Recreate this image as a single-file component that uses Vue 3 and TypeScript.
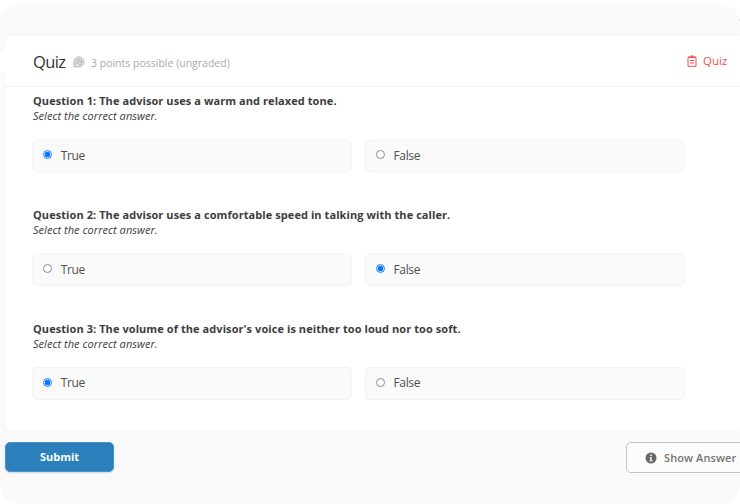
<script setup lang="ts">
import { ref } from 'vue'

interface Question {
  id: number
  text: string
  answer: 'True' | 'False'
}

const choices = ['True', 'False'] as const

const questions = ref<Question[]>([
  { id: 1, text: 'The advisor uses a warm and relaxed tone.', answer: 'True' },
  { id: 2, text: 'The advisor uses a comfortable speed in talking with the caller.', answer: 'False' },
  { id: 3, text: "The volume of the advisor's voice is neither too loud nor too soft.", answer: 'True' },
])
</script>

<template>
  <main class="page">
    <span class="edge-tab"></span>
    <span class="edge-dot"></span>
    <section class="card">
      <header class="card-head">
        <h1 class="title">Quiz</h1>
        <svg class="badge" viewBox="0 0 12 12" fill="none" stroke="#b2b2b2" stroke-width="1">
          <path d="M1 10.8V6A5 4.9 0 1 1 6 10.8Z" fill="#e6e6e6" />
          <path d="M3 9V6a3 2.9 0 1 1 3 3M5 8V6a1.2 1.2 0 1 1 1.4 1.2" />
        </svg>
        <span class="points">3 points possible (ungraded)</span>
        <span class="kind">
          <svg class="kind-icon" viewBox="0 0 10 12" fill="none" stroke="#f0504f" stroke-width="1">
            <path d="M1 2.3h8v9H1z" />
            <path d="M1 2.2h8" stroke-width="1.5" />
            <path d="M3.5 1.2h3M5 0v2M2.8 5.5h4.4M2.8 8h4.4" />
          </svg>
          <span>Quiz</span>
        </span>
      </header>
      <div class="questions">
        <fieldset v-for="q in questions" :key="q.id" class="question">
          <h2 class="prompt">Question {{ q.id }}: {{ q.text }}</h2>
          <p class="hint">Select the correct answer.</p>
          <div class="choices">
            <label v-for="c in choices" :key="c" class="choice">
              <input v-model="q.answer" class="radio" type="radio" :name="`q${q.id}`" :value="c" />
              <span>{{ c }}</span>
            </label>
          </div>
        </fieldset>
      </div>
    </section>
    <footer class="actions">
      <button class="submit" type="button">Submit</button>
      <button class="show" type="button">
        <svg class="info" viewBox="0 0 12 12">
          <circle cx="6" cy="6" r="5.5" fill="#666" />
          <path d="M5 2.5h2v1.4H5zM4.6 5H7v3.2h.7v1.2H4.4V8.2H5V6.1h-.4z" fill="#d8d8d8" />
        </svg>
        <span>Show Answer</span>
      </button>
    </footer>
  </main>
</template>

<style>
body {
  background: #fff;
}
</style>

<style scoped>
.page {
  position: relative;
  box-sizing: border-box;
  width: 740px;
  height: 500px;
  margin-top: 4px;
  padding: 32px 0 0 5px;
  overflow: hidden;
  border-radius: 20px;
  background: #fafafa;
  color: #3c3c3c;
  font-family: 'Open Sans', sans-serif;
}
.edge-tab {
  position: absolute;
  left: 0;
  top: 48px;
  width: 5px;
  height: 20px;
  background: #fff;
}
.edge-dot {
  position: absolute;
  right: -5px;
  top: 12px;
  width: 6px;
  height: 6px;
  border-radius: 50%;
  background: #ccc;
}
.card {
  box-sizing: border-box;
  height: 394px;
  border-radius: 5px 0 0 5px;
  background: #fff;
  box-shadow: 0 0 2px rgba(0, 0, 0, 0.07);
}
.card-head {
  box-sizing: border-box;
  display: flex;
  align-items: center;
  height: 51px;
  padding: 0 13px 0 28px;
  border-bottom: 1px solid #f1f1f1;
}
.title {
  margin: 0;
  padding-top: 1px;
  width: 33px;
  font-size: 16.5px;
  font-weight: 400;
  line-height: 24px;
  letter-spacing: -0.6px;
  color: #333;
}
.badge {
  width: 12px;
  height: 12px;
  margin: 1px 6px 0 7px;
}
.points {
  padding-top: 3px;
  font-size: 10.5px;
  line-height: 16px;
  color: #aaa;
}
.kind {
  display: flex;
  align-items: center;
  gap: 6px;
  margin-left: auto;
  font-size: 11.5px;
  line-height: 16px;
  letter-spacing: -0.1px;
  color: #f0504f;
}
.kind-icon {
  width: 10px;
  height: 12px;
}
.questions {
  display: flex;
  flex-direction: column;
  gap: 33.7px;
  padding: 6.3px 55px 0 28px;
}
.question {
  min-width: 0;
  margin: 0;
  padding: 0;
  border: 0;
  height: 80px;
}
.prompt,
.hint {
  margin: 0;
  line-height: 15px;
  white-space: nowrap;
}
.prompt {
  font-size: 11px;
  font-weight: 700;
  letter-spacing: 0.075px;
}
.hint {
  font-size: 11px;
  letter-spacing: 0.04px;
  font-style: italic;
}
.choices {
  display: grid;
  grid-template-columns: 1fr 1fr;
  gap: 13px;
  margin-top: 16.3px;
  margin-left: -0.6px;
}
.choice {
  box-sizing: border-box;
  display: flex;
  align-items: center;
  gap: 8.5px;
  height: 32.6px;
  padding: 0 9.8px;
  border: 1px solid #f3f3f3;
  border-radius: 5px;
  background: #fafafa;
  font-size: 12px;
  line-height: 16px;
  letter-spacing: -0.35px;
  color: #505050;
}
.radio {
  appearance: none;
  box-sizing: border-box;
  width: 9px;
  height: 9px;
  margin: 0 0 2px;
  border: 1px solid #8b8b8b;
  border-radius: 50%;
  background: #fff;
}
.radio:checked {
  border-color: #2684ff;
  background: radial-gradient(circle, #0874ff 0 2.4px, #c5e0ff 3px 4px);
}
.actions {
  display: flex;
  justify-content: space-between;
  padding-top: 12px;
}
.submit,
.show {
  box-sizing: border-box;
  font-family: inherit;
  font-size: 11px;
  line-height: 16px;
}
.submit {
  width: 109px;
  height: 30px;
  padding: 0;
  border: 1px solid #4a93c6;
  border-radius: 5px;
  background: #2b80bb;
  color: #fff;
  font-weight: 700;
  box-shadow: 0 1px 2px rgba(43, 128, 187, 0.25);
}
.show {
  display: flex;
  flex: none;
  align-items: center;
  gap: 7px;
  width: 132px;
  height: 31px;
  margin-right: -18px;
  padding: 0 18px;
  border: 1px solid #c5c5c5;
  border-radius: 5px;
  background: #fcfcfc;
  color: #747474;
  font-weight: 600;
  letter-spacing: 0.1px;
  white-space: nowrap;
}
.info {
  flex: none;
  width: 12px;
  height: 12px;
}
</style>
